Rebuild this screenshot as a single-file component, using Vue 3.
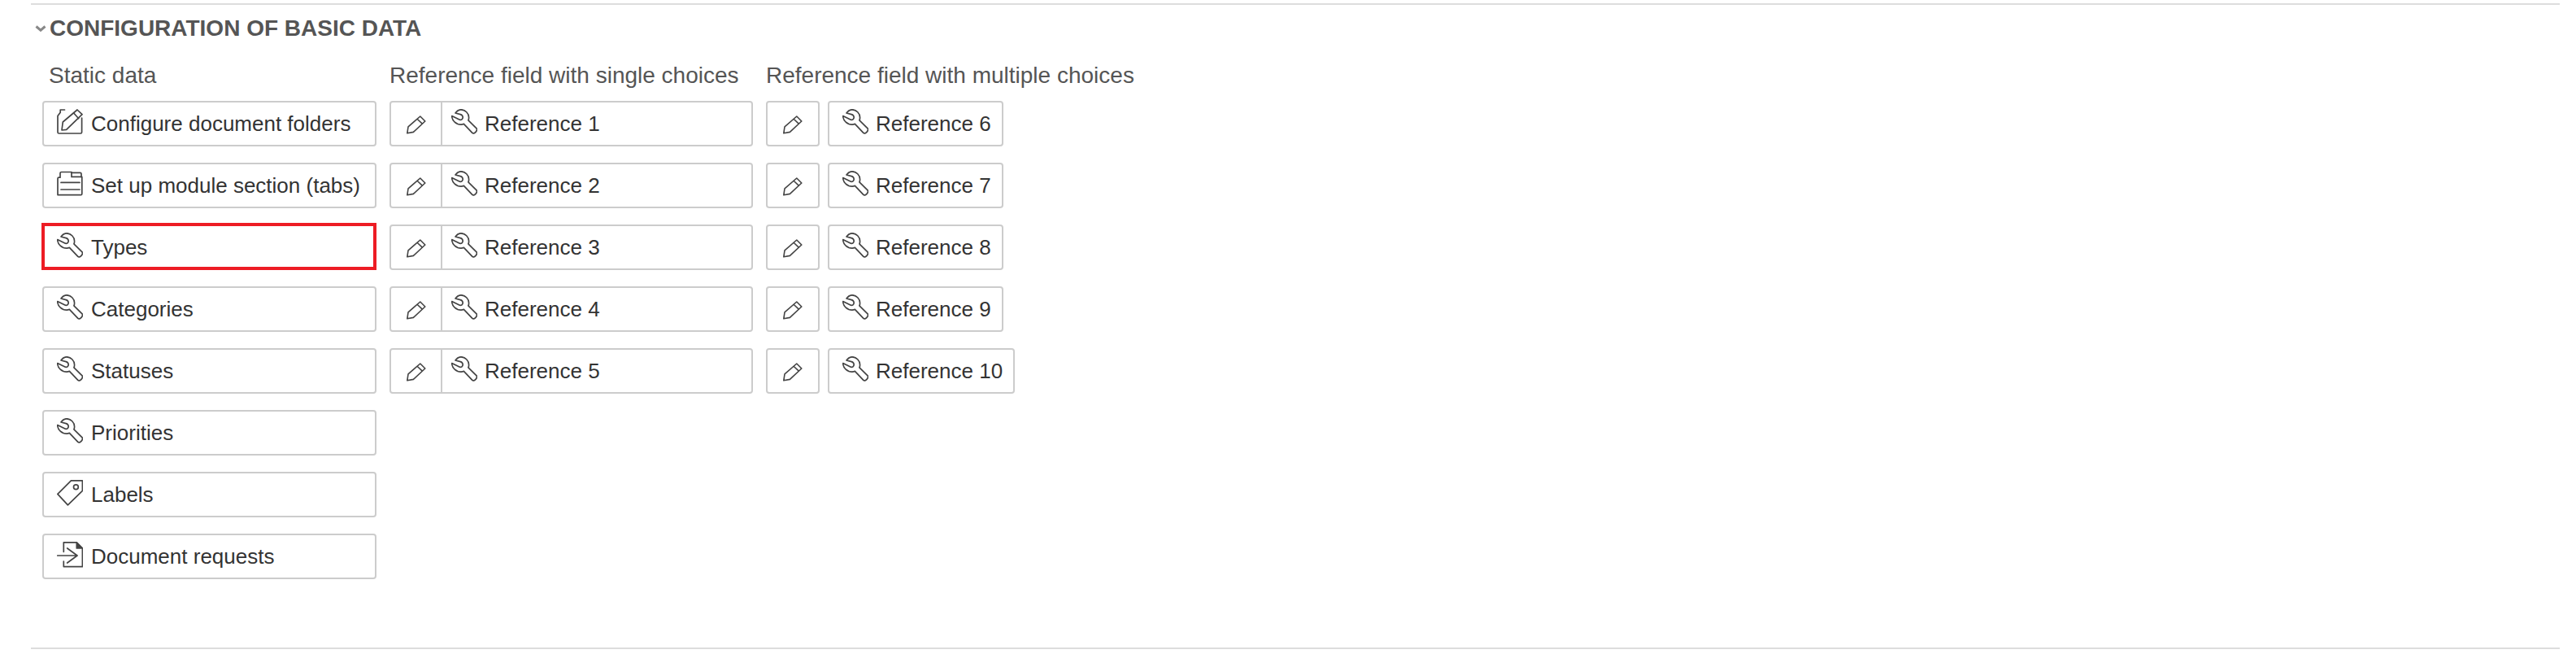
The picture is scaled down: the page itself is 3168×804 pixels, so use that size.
<script setup>
const staticRows = [
  { label: 'Configure document folders', icon: 'edit' },
  { label: 'Set up module section (tabs)', icon: 'folder' },
  { label: 'Types', icon: 'wrench', marked: true },
  { label: 'Categories', icon: 'wrench' },
  { label: 'Statuses', icon: 'wrench' },
  { label: 'Priorities', icon: 'wrench' },
  { label: 'Labels', icon: 'tag' },
  { label: 'Document requests', icon: 'doc' }
]
const singleRows = [1, 2, 3, 4, 5].map(n => 'Reference ' + n)
const multiRows = [6, 7, 8, 9, 10].map(n => 'Reference ' + n)
const wrench = 'M5 5C7 2.2 9.6.8 12 .8c5.2 0 9.6 4.6 9.6 9.6 0 1.3-.2 2.4-.7 3.4L30.8 23.7c1.2 1.2.9 2.7-.6 4.4-1.6 1.8-3.3 2.4-4.6 1.1L15.4 18.4c-1.2.5-2.3.7-3.4.7-5.6 0-11.3-4.6-11.3-10.6L10.4 13.2c2.2.5 4-1.2 3.8-3.2-.2-2-1.6-3-3-3.4Z'
</script>

<template>
  <div class="page">
    <section class="panel">
      <h2 class="heading">
        <svg class="chevron" viewBox="0 0 14 8" width="14" height="8"><path d="M1.5 1.5 7 6.2 12.5 1.5" /></svg>
        <span>CONFIGURATION OF BASIC DATA</span>
      </h2>
      <div class="columns">
        <div class="col col-static">
          <div class="col-title first">Static data</div>
          <div v-for="row in staticRows" :key="row.label" class="btn wide" :class="{ marked: row.marked }">
            <svg class="icon" viewBox="0 0 32 32">
              <template v-if="row.icon === 'edit'">
                <path d="M9.5 1H4.2V4.2L1 8.5V28.6Q1 30 2.4 30H29.2Q30.6 30 30.6 28.6V11" />
                <path d="M6 26 7.3 16 25 1 31 6.7 11.7 25.3Z" />
                <path d="M20.7 5 26.7 11.7" />
              </template>
              <template v-else-if="row.icon === 'folder'">
                <path d="M1 29.4V9.6Q1 8.2 2.4 8.2H4V3Q4 1.5 5.5 1.5H18V7.4H30.8V28.2Q30.8 29.6 29.4 29.6H1Z" />
                <path d="M18 2.4H28.6Q30 2.4 30 3.8V7.4M5 14.4H28M5 23H28" />
              </template>
              <template v-else-if="row.icon === 'wrench'">
                <path :d="wrench" />
              </template>
              <template v-else-if="row.icon === 'tag'">
                <path d="M31.4.9H17.4L.9 17.4 13.4 30.8 31.4 13.4Z" />
                <circle cx="23.4" cy="8.7" r="2.9" />
              </template>
              <template v-else>
                <path d="M8.3 12.3V.9H24.3L31.4 8V30.6H8.3V24" />
                <path class="solid" d="M24.3 1 31.4 8H24.3Z" />
                <path d="M.7 17H25M12.7 8 25 17 12.7 26" />
              </template>
            </svg>
            <span>{{ row.label }}</span>
          </div>
        </div>

        <div class="col col-single">
          <div class="col-title">Reference field with single choices</div>
          <div v-for="label in singleRows" :key="label" class="group">
            <div class="pencil-cell">
              <svg class="pencil" viewBox="0 0 24 24"><path d="M.8 21.8 2 13.8 16.8 1 22.8 7 8.4 20.4ZM12.8 4 19.6 10.4" /></svg>
            </div>
            <div class="group-main">
              <svg class="icon" viewBox="0 0 32 32"><path :d="wrench" /></svg>
              <span>{{ label }}</span>
            </div>
          </div>
        </div>

        <div class="col col-multi">
          <div class="col-title">Reference field with multiple choices</div>
          <div v-for="label in multiRows" :key="label" class="pair">
            <div class="btn pencil-btn">
              <svg class="pencil" viewBox="0 0 24 24"><path d="M.8 21.8 2 13.8 16.8 1 22.8 7 8.4 20.4ZM12.8 4 19.6 10.4" /></svg>
            </div>
            <div class="btn">
              <svg class="icon" viewBox="0 0 32 32"><path :d="wrench" /></svg>
              <span>{{ label }}</span>
            </div>
          </div>
        </div>
      </div>
    </section>
  </div>
</template>

<style scoped>
.page {
  width: 3168px;
  height: 804px;
  box-sizing: border-box;
  padding: 4px 20px 0 38px;
  background: #fff;
  font-family: "Liberation Sans", Arial, sans-serif;
  overflow: hidden;
}
.panel {
  border-top: 2px solid #ddd;
  border-bottom: 2px solid #ddd;
  height: 794px;
  box-sizing: border-box;
}
.heading {
  margin: 0;
  height: 58px;
  display: flex;
  align-items: center;
  gap: 4px;
  padding-left: 5px;
  font-size: 28px;
  font-weight: 700;
  color: #555;
}
.chevron {
  fill: none;
  stroke: #888;
  stroke-width: 3;
}
.columns {
  display: flex;
  gap: 16px;
  padding-left: 14px;
}
.col {
  display: flex;
  flex-direction: column;
  gap: 20px;
  align-items: flex-start;
}
.col-static { width: 411px; }
.col-single { width: 447px; }
.col-title {
  height: 40px;
  line-height: 58px;
  font-size: 28px;
  color: #555;
  white-space: nowrap;
}
.col-title.first { padding-left: 8px; }
.btn {
  height: 56px;
  box-sizing: border-box;
  display: flex;
  align-items: center;
  gap: 9px;
  padding: 0 13px 0 16px;
  border: 2px solid #ccc;
  border-radius: 4px;
  font-size: 26px;
  color: #333;
  background: #fff;
  white-space: nowrap;
}
.wide { width: 411px; position: relative; gap: 10px; }
.marked::after {
  content: "";
  position: absolute;
  inset: -4px -2px -2px -3px;
  border: 4px solid #ed1c24;
}
.icon {
  width: 32px;
  height: 32px;
  flex: none;
  margin-top: -4px;
  fill: none;
  stroke: #444;
  stroke-width: 1.7;
  stroke-linejoin: round;
  stroke-linecap: round;
}
.icon .solid { fill: #444; }
.group {
  width: 447px;
  height: 56px;
  box-sizing: border-box;
  display: flex;
  border: 2px solid #ccc;
  border-radius: 4px;
}
.pencil-cell {
  width: 63px;
  box-sizing: border-box;
  flex: none;
  display: flex;
  align-items: center;
  justify-content: center;
  border-right: 2px solid #ccc;
}
.group-main {
  display: flex;
  align-items: center;
  gap: 9px;
  padding-left: 11px;
  font-size: 26px;
  color: #333;
  white-space: nowrap;
}
.pencil {
  width: 24px;
  height: 24px;
  margin-top: 4px;
  fill: none;
  stroke: #444;
  stroke-width: 1.6;
  stroke-linejoin: round;
}
.pair {
  display: flex;
  gap: 10px;
}
.pencil-btn {
  width: 66px;
  padding: 0;
  justify-content: center;
}
</style>

<style>
body { background: #fff; }
</style>
